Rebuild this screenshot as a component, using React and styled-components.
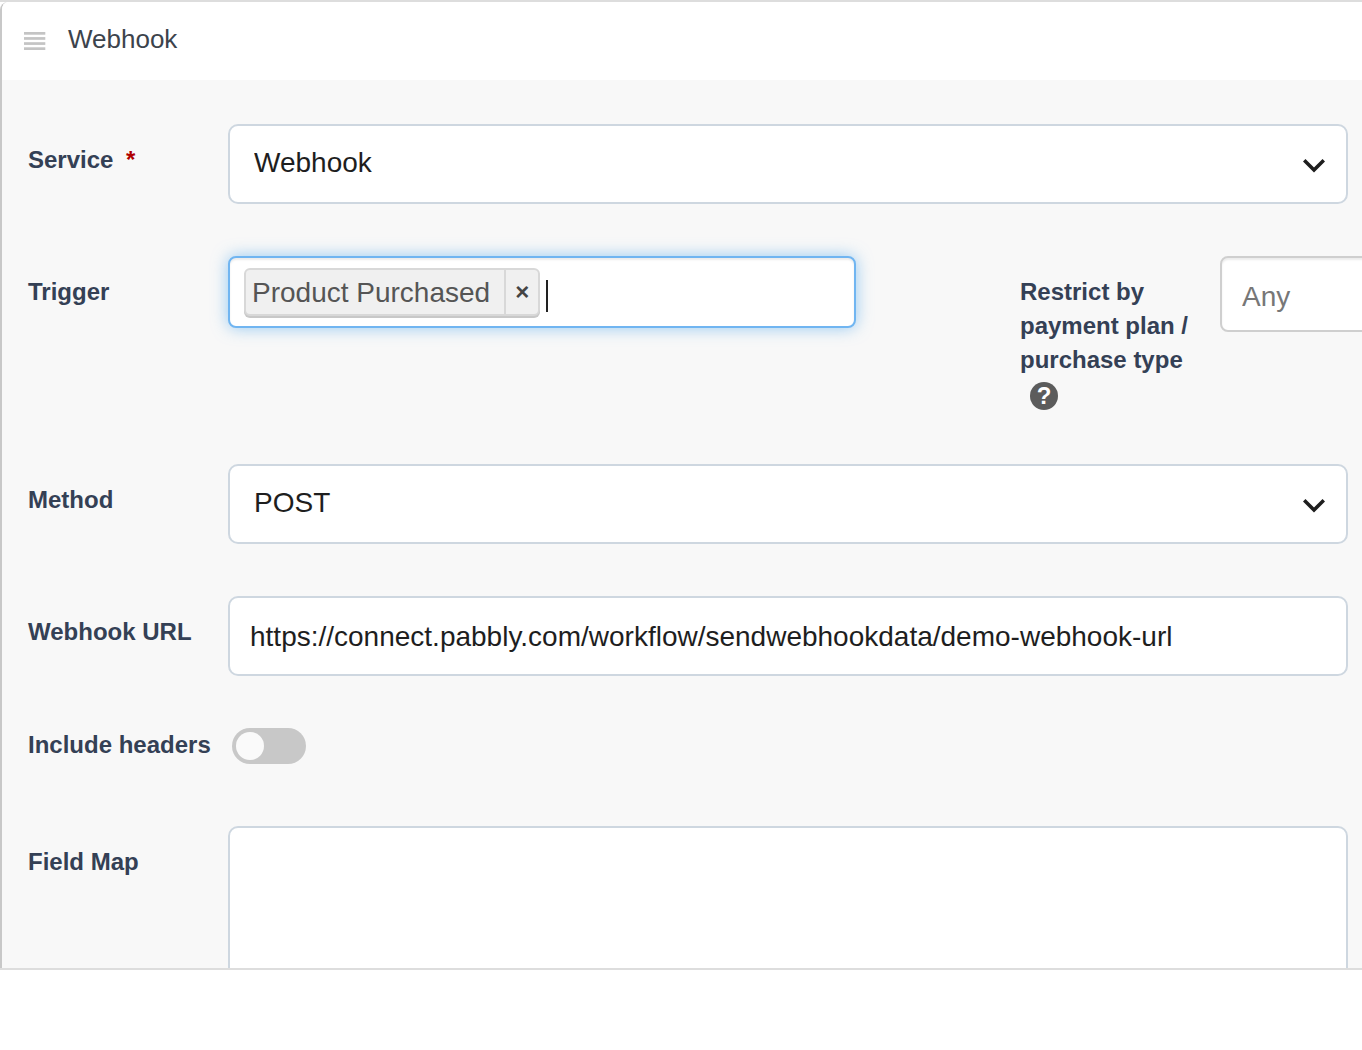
import React, { useState } from 'react';
import styled, { createGlobalStyle, css } from 'styled-components';

const COLOR = {
  WHITE: '#ffffff',
  BODY: '#f8f8f8',
  LINE: '#dddddd',
  PANEL_LINE: '#c8c8c8',
  FIELD_LINE: '#ced7e0',
  FOCUS: '#70b5f1',
  LABEL: '#344055',
  TITLE: '#3c434c',
  TEXT: '#1e1e1e',
  REQUIRED: '#b00000',
};

const GlobalStyle = createGlobalStyle`
  * {
    box-sizing: border-box;
  }
  body {
    margin: 0;
    background: ${COLOR.WHITE};
    font-family: 'Liberation Sans', Arial, sans-serif;
  }
  button, input, select, textarea {
    font-family: inherit;
  }
`;

const Frame = styled.main`
  height: calc(100vh - 80px);
  overflow: hidden;
  border-top: 2px solid ${COLOR.LINE};
  border-bottom: 2px solid ${COLOR.LINE};
`;

const Panel = styled.section`
  overflow: hidden;
  border-left: 2px solid ${COLOR.PANEL_LINE};
  border-radius: 8px 0 0 0;
`;

const Header = styled.header`
  display: flex;
  align-items: center;
  gap: 22px;
  height: 78px;
  padding: 0 22px;
  background: ${COLOR.WHITE};
`;

const DragHandle = styled.button`
  display: flex;
  padding: 0;
  border: 0;
  background: none;
  cursor: move;
`;

const Title = styled.h1`
  margin: 0;
  padding-bottom: 4px;
  color: ${COLOR.TITLE};
  font-size: 26px;
  font-weight: 400;
  line-height: 34px;
`;

const Form = styled.form`
  display: flex;
  flex-direction: column;
  gap: 52px;
  padding: 44px 14px 44px 26px;
  background: ${COLOR.BODY};
`;

const Row = styled.div`
  display: flex;
  align-items: flex-start;
  min-height: 46px;
`;

const Label = styled.label`
  flex: none;
  width: 200px;
  padding: ${({ $compact }) => ($compact ? '0 16px 0 0' : '19px 16px 1px 0')};
  color: ${COLOR.LABEL};
  font-size: 24px;
  font-weight: 700;
  line-height: 34px;
`;

const Required = styled.span`
  margin-left: 6px;
  color: ${COLOR.REQUIRED};
`;

const Help = styled.button`
  display: inline-flex;
  align-items: center;
  justify-content: center;
  width: 28px;
  height: 28px;
  margin-left: 10px;
  padding: 0;
  border: 0;
  border-radius: 50%;
  background: #5c5c5c;
  color: ${COLOR.WHITE};
  font-size: 24px;
  font-weight: 700;
  line-height: 28px;
  vertical-align: middle;
`;

const field = css`
  width: 100%;
  border: 2px solid ${COLOR.FIELD_LINE};
  border-radius: 10px;
  outline: 0;
  background: ${COLOR.WHITE};
  color: ${COLOR.TEXT};
  font-size: 28px;
`;

const SelectBox = styled.div`
  position: relative;
  flex: 1;
`;

const Select = styled.select`
  ${field}
  display: block;
  height: 80px;
  padding: 0 60px 4px 24px;
  appearance: none;
`;

const Chevron = styled.svg`
  position: absolute;
  top: 34px;
  right: 23px;
  pointer-events: none;
`;

const TextInput = styled.input`
  ${field}
  height: 80px;
  padding: 2px 20px 0;
`;

const TextArea = styled.textarea`
  ${field}
  display: block;
  height: 152px;
  padding: 16px 20px;
`;

const TagBox = styled.div`
  display: flex;
  flex: none;
  gap: 6px;
  width: 628px;
  height: 72px;
  margin-right: 164px;
  padding: 10px 14px;
  border: 2px solid ${COLOR.FOCUS};
  border-radius: 8px;
  background: ${COLOR.WHITE};
  box-shadow: inset 0 2px 2px rgba(0, 0, 0, 0.08), 0 0 16px rgba(82, 168, 236, 0.6);
`;

const Tag = styled.span`
  display: flex;
  height: 48px;
  border: 2px solid #d8d8d8;
  border-radius: 6px;
  background: #f0f0f0;
  box-shadow: 0 2px 0 #c8c8c8;
  color: #555555;
  font-size: 28px;
  line-height: 46px;
`;

const TagText = styled.span`
  padding: 0 14px 0 6px;
  white-space: nowrap;
`;

const TagRemove = styled.button`
  width: 34px;
  padding: 0;
  border: 0;
  border-left: 2px solid #d8d8d8;
  background: none;
  color: #444444;
  font-size: 24px;
  font-weight: 700;
`;

const TagEntry = styled.div`
  display: flex;
  flex: 1;
  min-width: 0;
  height: 44px;
  padding-top: 12px;
`;

const Caret = styled.span`
  flex: none;
  width: 2px;
  background: #222222;
`;

const TagInput = styled.input`
  flex: 1;
  min-width: 0;
  padding: 0;
  border: 0;
  outline: 0;
  background: none;
  font-size: 28px;
`;

const PlanInput = styled.input`
  flex: none;
  width: 628px;
  height: 76px;
  padding: 6px 20px 0;
  border: 2px solid #cfcfcf;
  border-radius: 8px;
  outline: 0;
  background: ${COLOR.WHITE};
  box-shadow: inset 0 2px 2px rgba(0, 0, 0, 0.08);
  font-size: 28px;
  &::placeholder {
    color: #777777;
  }
`;

const Switch = styled.input`
  display: flex;
  align-items: center;
  width: 74px;
  height: 36px;
  margin: 0 4px;
  padding: 4px;
  border-radius: 18px;
  background: #c8c8c8;
  appearance: none;
  &::before {
    content: '';
    width: 28px;
    height: 28px;
    border-radius: 50%;
    background: #fafafa;
  }
  &:checked {
    justify-content: flex-end;
    background: ${COLOR.FOCUS};
  }
`;

const SelectField = ({ id, options }) => (
  <SelectBox>
    <Select id={id}>
      {options.map((option) => (
        <option key={option}>{option}</option>
      ))}
    </Select>
    <Chevron width="22" height="16" viewBox="0 0 22 16" aria-hidden="true">
      <path d="M1.2 2.2L11 12L20.8 2.2" fill="none" stroke={COLOR.TEXT} strokeWidth="3.6" />
    </Chevron>
  </SelectBox>
);

const App = () => {
  const [url, setUrl] = useState('https://connect.pabbly.com/workflow/sendwebhookdata/demo-webhook-url');
  const [tags, setTags] = useState(['Product Purchased']);

  return (
    <>
      <GlobalStyle />
      <Frame>
        <Panel>
          <Header>
            <DragHandle type="button" aria-label="Move">
              <svg width="22" height="18" viewBox="0 0 22 18" fill="#c4c4c4">
                <rect y="0" width="21.3" height="2.7" />
                <rect y="5.1" width="21.3" height="2.7" />
                <rect y="10.2" width="21.3" height="2.7" />
                <rect y="15.3" width="21.3" height="2.7" />
              </svg>
            </DragHandle>
            <Title>Webhook</Title>
          </Header>
          <Form onSubmit={(e) => e.preventDefault()}>
            <Row>
              <Label htmlFor="service">
                Service <Required>*</Required>
              </Label>
              <SelectField id="service" options={['Webhook']} />
            </Row>
            <Row>
              <Label htmlFor="trigger">Trigger</Label>
              <TagBox>
                {tags.map((tag) => (
                  <Tag key={tag}>
                    <TagText>{tag}</TagText>
                    <TagRemove
                      type="button"
                      aria-label={`Remove ${tag}`}
                      onClick={() => setTags(tags.filter((t) => t !== tag))}
                    >
                      ×
                    </TagRemove>
                  </Tag>
                ))}
                <TagEntry>
                  <Caret />
                  <TagInput id="trigger" />
                </TagEntry>
              </TagBox>
              <Label htmlFor="plan">
                Restrict by payment plan / purchase type{' '}
                <Help type="button" aria-label="Help">
                  ?
                </Help>
              </Label>
              <PlanInput id="plan" placeholder="Any" />
            </Row>
            <Row>
              <Label htmlFor="method">Method</Label>
              <SelectField id="method" options={['POST', 'GET']} />
            </Row>
            <Row>
              <Label htmlFor="url">Webhook URL</Label>
              <TextInput id="url" value={url} onChange={(e) => setUrl(e.target.value)} />
            </Row>
            <Row>
              <Label htmlFor="headers" $compact>
                Include headers
              </Label>
              <Switch id="headers" type="checkbox" />
            </Row>
            <Row>
              <Label htmlFor="fieldMap">Field Map</Label>
              <TextArea id="fieldMap" />
            </Row>
          </Form>
        </Panel>
      </Frame>
    </>
  );
};

export default App;
